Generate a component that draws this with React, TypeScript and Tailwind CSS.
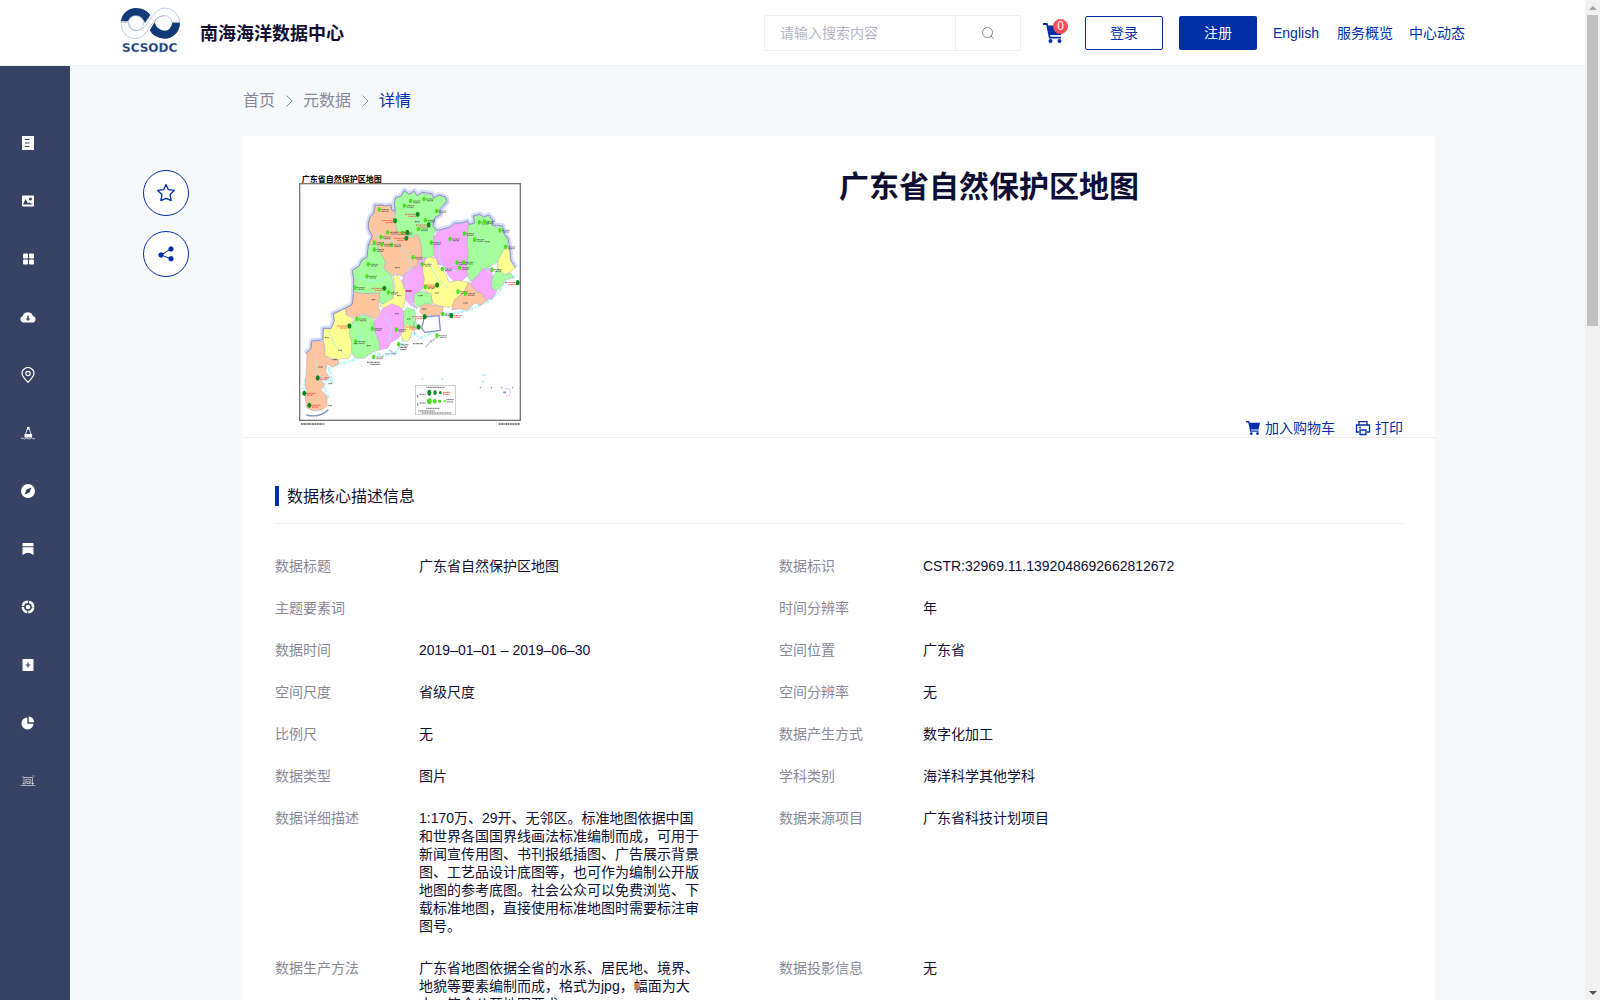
import React from 'react';

type Field = { label: string; value: string };

const fields: [Field, Field][] = [
  [{ label: '数据标题', value: '广东省自然保护区地图' }, { label: '数据标识', value: 'CSTR:32969.11.1392048692662812672' }],
  [{ label: '主题要素词', value: '' }, { label: '时间分辨率', value: '年' }],
  [{ label: '数据时间', value: '2019–01–01 – 2019–06–30' }, { label: '空间位置', value: '广东省' }],
  [{ label: '空间尺度', value: '省级尺度' }, { label: '空间分辨率', value: '无' }],
  [{ label: '比例尺', value: '无' }, { label: '数据产生方式', value: '数字化加工' }],
  [{ label: '数据类型', value: '图片' }, { label: '学科类别', value: '海洋科学其他学科' }],
  [
    {
      label: '数据详细描述',
      value:
        '1:170万、29开、无邻区。标准地图依据中国和世界各国国界线画法标准编制而成，可用于新闻宣传用图、书刊报纸插图、广告展示背景图、工艺品设计底图等，也可作为编制公开版地图的参考底图。社会公众可以免费浏览、下载标准地图，直接使用标准地图时需要标注审图号。',
    },
    { label: '数据来源项目', value: '广东省科技计划项目' },
  ],
  [
    { label: '数据生产方法', value: '广东省地图依据全省的水系、居民地、境界、地貌等要素编制而成，格式为jpg，幅面为大小，符合公开地图要求。' },
    { label: '数据投影信息', value: '无' },
  ],
];

const menu: { name: string; icon: React.ReactNode }[] = [
  { name: '元数据', icon: <path fillRule="evenodd" d="M2 1h12v14H2zM5 4v1h4.500V4zM5 7.500v1h4.500v-1zM5 11v1h4.500v-1z" /> },
  {
    name: '图片',
    icon: <path fillRule="evenodd" d="M3 2.500h10a1 1 0 0 1 1 1v9a1 1 0 0 1-1 1H3a1 1 0 0 1-1-1v-9a1 1 0 0 1 1-1zM3 11.500h10L9.500 9.500 8 10.500 5.500 6zM10.500 4.500a1.500 1.500 0 1 0 0 3 1.500 1.500 0 0 0 0-3z" />,
  },
  {
    name: '分类',
    icon: (
      <>
        <rect x="3" y="2.500" width="5" height="5" rx="1" />
        <rect x="9" y="2.500" width="5" height="5" rx="1" />
        <rect x="3" y="8.500" width="5" height="5" rx="1" />
        <rect x="9" y="8.500" width="5" height="5" rx="1" />
      </>
    ),
  },
  {
    name: '下载',
    icon: <path fillRule="evenodd" d="M4 13.500a3.400 3.400 0 0 1-1.300-6.600A5.400 5.400 0 0 1 13 7a3.300 3.300 0 0 1-1 6.500zM7.300 6.500v3H5.700L8 12l2.300-2.500H8.700v-3z" />,
  },
  {
    name: '位置',
    icon: (
      <g fill="none" stroke="currentColor" strokeWidth="1.200">
        <path d="M8 15.300C5 12 2 9.300 2 6.500a6 6 0 0 1 12 0c0 2.800-3 5.500-6 8.800z" />
        <circle cx="8" cy="6.500" r="2.200" />
      </g>
    ),
  },
  {
    name: '浮标',
    icon: (
      <>
        <path d="M7 2h2.500v2.500H7zM4.500 9h7.600v3.500H4.500z" />
        <path d="M7.200 4 5.500 9.500M9.300 4 11 9.500" fill="none" stroke="currentColor" strokeWidth=".8" />
        <path d="M1 13.500q1.200-1 2.300 0t2.300 0 2.400 0 2.300 0 2.300 0 2.400 0" fill="none" stroke="currentColor" strokeWidth=".7" />
      </>
    ),
  },
  { name: '导航', icon: <path fillRule="evenodd" d="M8 1a7 7 0 1 0 0 14A7 7 0 0 0 8 1zM11.500 4.500l-2 5-5 2 2-5z" /> },
  { name: '专题', icon: <path d="M2.500 2h11v3.200h-11zM2.500 6.300h11V14L10.500 12.300 8 11.700l-2.500.600L2.500 14z" /> },
  {
    name: '服务',
    icon: (
      <>
        <circle cx="8" cy="8" r="5.200" fill="none" stroke="currentColor" strokeWidth="2.600" strokeDasharray="7.170 1" strokeDashoffset="-.5" />
        <circle cx="8" cy="8" r="2.300" />
      </>
    ),
  },
  { name: '新增', icon: <path fillRule="evenodd" d="M2.500 2h11v12h-11zM7.400 5.600v1.800H5.600v1.200h1.800v1.800h1.200V8.600h1.800V7.400H8.600V5.600z" /> },
  { name: '统计', icon: <path d="M7.300 2.500V8.700h6.200A6 6 0 1 1 7.300 2.500zM8.800 7.300V1.500a5.400 5.400 0 0 1 5.200 5.800z" /> },
  {
    name: '平台',
    icon: (
      <g fill="none" stroke="currentColor" strokeWidth=".9" opacity=".65">
        <path d="M4 12V4.500h8.500V12M5.800 11V6.300h5V11M.5 12.500h15M2 4h2M12.500 3h2M2.500 10.500h2M11.500 10.500H14M7 8.500h2.500v2H7z" />
      </g>
    ),
  },
];

function Logo() {
  return (
    <svg viewBox="57 22 189 141" className="h-[47px] w-[63px]" role="img" aria-label="SCSODC">
      <g stroke="#9fb0cc" strokeWidth="2" fill="#fff">
        <path d="M64 68A44 44 0 0 0 108 117C145 117 152 48 194 48A22 22 0 0 1 216 68H239A45 45 0 0 0 194 25C154 25 148 93 108 93A22 22 0 0 1 86 68Z" />
      </g>
      <path d="M63 65A46 42 0 0 1 108 25Q136 25 151 46L135 70Q127 48 108 48Q90 48 85 65Z" fill="#123a78" />
      <path d="M240 69A46 47 0 0 1 194 117Q163 117 149 92L164 68Q171 93 194 93Q212 92 217 69Z" fill="#123a78" />
      <path d="M85 65Q90 48 108 48Q127 48 131 70Q127 93 108 93Q88 92 86 68M164 69Q168 48 194 48" fill="none" stroke="#9fb0cc" strokeWidth="2" />
      <text x="66" y="156" fontFamily="DejaVu Sans, sans-serif" fontWeight="bold" fontSize="36" fill="#123a78" stroke="#b9c7dc" strokeWidth="1">
        SCSODC
      </text>
    </svg>
  );
}

function CartIcon({ className }: { className: string }) {
  return (
    <svg viewBox="0 0 20 20" className={className} fill="currentColor" aria-hidden="true">
      <path d="M0 0h4.500l.8 2.500H20l-2 9.500H7l.5 1.700H18v1.800H6L3.300 2H0z" />
      <circle cx="7.500" cy="18" r="2" />
      <circle cx="16.500" cy="18" r="2" />
    </svg>
  );
}

function Separator() {
  return (
    <svg viewBox="0 0 16 16" className="size-4" fill="none" stroke="currentColor" aria-hidden="true">
      <path d="m5.500 2.500 5.500 5.500-5.500 5.500" />
    </svg>
  );
}

const regions: { color: string; points: string }[] = [
  { color: '#a4ff9c', points: '332,98 348,94 358,78 372,88 388,80 396,92 412,84 424,90 440,88 446,98 462,92 480,96 484,110 470,122 462,136 464,150 448,156 442,180 452,196 444,212 452,226 446,244 450,264 438,280 410,278 408,246 404,220 390,212 376,218 362,206 338,208 334,186 328,160 334,140 328,118' },
  { color: '#ffc69f', points: '272,122 290,118 302,124 318,120 318,134 330,140 326,160 334,186 336,208 362,208 378,220 398,208 408,240 410,276 398,292 398,304 378,308 352,334 330,326 320,332 296,310 302,292 284,260 276,238 250,240 262,214 252,196 250,176 256,156 266,146' },
  { color: '#a4ff9c', points: '250,240 276,238 284,260 302,292 296,310 320,332 326,370 324,400 300,418 280,412 284,382 240,386 204,380 206,342 202,318 222,304 230,286 246,276' },
  { color: '#f9a8ff', points: '446,214 466,196 496,188 508,176 530,176 546,168 550,204 548,236 552,266 546,306 550,330 532,346 510,352 490,332 478,302 456,298 448,274 446,240' },
  { color: '#a4ff9c', points: '550,178 570,176 566,154 584,150 596,158 612,152 622,166 620,180 636,188 650,184 656,206 668,222 668,240 654,254 650,280 636,292 610,308 592,312 580,330 558,350 548,334 544,306 550,266 546,236' },
  { color: '#ffff91', points: '668,240 674,262 676,286 690,308 676,322 658,330 644,324 636,306 640,282 656,256' },
  { color: '#a4ff9c', points: '640,310 658,330 678,324 686,338 664,342 652,360 640,374 620,372 618,342' },
  { color: '#f9a8ff', points: '562,346 582,330 592,312 620,310 622,340 618,370 636,378 622,402 602,404 588,384 574,380 556,366' },
  { color: '#ffff91', points: '418,282 434,276 454,280 460,304 482,326 492,352 520,346 548,352 552,370 530,386 514,408 494,428 470,424 444,416 436,386 412,372 416,342 410,312' },
  { color: '#ffc69f', points: '552,350 574,380 588,384 606,406 588,420 568,414 548,436 526,432 500,434 508,404 534,384' },
  { color: '#f9a8ff', points: '382,310 398,304 400,284 422,278 412,312 418,342 414,370 392,386 386,416 396,430 376,420 358,400 362,382 350,354 356,330' },
  { color: '#ffff91', points: '324,332 336,330 354,356 362,384 360,406 354,430 338,432 324,426 296,430 284,422 324,400 330,368' },
  { color: '#a4ff9c', points: '388,386 412,378 438,388 442,414 416,420 398,428 386,406' },
  { color: '#ffc69f', points: '408,424 420,416 446,420 474,426 472,446 448,460 434,448 420,458 404,440' },
  { color: '#ffc69f', points: '206,382 240,386 284,384 280,422 286,446 270,462 236,446 210,460 184,448 182,430 200,420' },
  { color: '#f9a8ff', points: '320,416 344,426 356,438 356,466 358,496 340,520 318,532 308,550 284,554 282,528 268,494 266,470 286,450 290,434' },
  { color: '#a4ff9c', points: '356,438 368,428 390,436 392,470 398,490 374,488 366,510 356,494' },
  { color: '#ffff91', points: '366,476 384,490 376,516 368,530 352,524 348,508' },
  { color: '#a4ff9c', points: '210,462 238,448 266,464 268,496 282,530 284,554 260,562 238,580 212,578 196,560 200,530 190,502' },
  { color: '#ffff91', points: '180,430 184,450 206,462 192,504 200,532 200,562 190,582 170,580 152,590 130,574 116,576 120,552 114,522 116,490 138,492 148,468 146,448' },
  { color: '#ffc69f', points: '94,528 116,532 120,572 136,582 158,582 162,596 142,606 126,596 122,620 134,638 122,642 112,632 104,638 118,660 108,674 126,696 126,722 112,734 86,738 66,730 60,700 66,680 60,660 64,620 66,564 78,552 80,530' },
];

const outline =
  'M62,566L78,550 80,528 114,524 114,490 138,490 148,468 144,446 180,430 202,418 206,382 206,342 202,316 222,304 230,286 246,276 250,240 262,214 250,192 250,174 256,154 266,144 270,120 302,122 318,120 320,134 330,140 328,116 332,98 348,94 358,76 372,88 388,78 396,92 412,82 440,86 446,98 462,90 482,96 486,110 464,136 466,150 450,158 444,182 454,196 466,194 496,186 508,174 530,174 548,168 552,178 568,174 566,152 584,148 596,156 612,150 624,166 622,180 652,182 658,206 670,222 676,262 678,286 692,308';

// x, y pairs of the reserve markers
const reserves = [
  [283, 134], [358, 122], [377, 108], [417, 102], [455, 138], [421, 166], [400, 192], [439, 233], [308, 202], [288, 216], [268, 233],
  [320, 240], [353, 204], [250, 298], [246, 334], [210, 368], [310, 382], [384, 277], [411, 298], [495, 222], [538, 206], [569, 224],
  [645, 196], [583, 172], [599, 170], [516, 293], [536, 292], [524, 308], [472, 312], [421, 366], [519, 380], [541, 386], [621, 314],
  [216, 462], [262, 491], [334, 494], [212, 530], [341, 538], [266, 576], [456, 512], [473, 447], [662, 246], [268, 254], [290, 238],
];
const nationalReserves = [
  [330, 167], [398, 148], [431, 180], [367, 202], [364, 220], [298, 370], [456, 360], [193, 483], [401, 486], [419, 455], [499, 452],
  [698, 353], [98, 639], [58, 685], [73, 721],
];

function ReserveMap() {
  return (
    <svg viewBox="42 30 666 756" className="h-[252px] w-[222px]" role="img" aria-label="广东省自然保护区地图">
      <text x="50" y="50" fontSize="24" fontWeight="bold" fontFamily="Liberation Sans, Noto Sans CJK SC, sans-serif">
        广东省自然保护区地图
      </text>
      <rect x="44" y="56" width="662" height="710" fill="none" stroke="#777" strokeWidth="4" />
      <path d={outline} fill="none" stroke="#d5dcff" strokeWidth="16" strokeLinejoin="round" />
      <path
        d="M130,700L116,664 124,644 140,650 132,610 150,600 198,588 262,562 290,572 330,566 352,530 392,506 404,520 450,500M472,450L500,446 550,436 604,412 640,384 660,352 696,330M62,640L56,670 64,700"
        fill="none"
        stroke="#bff8fb"
        strokeWidth="8"
        strokeDasharray="14 4 6 3"
      />
      {regions.map((r) => (
        <polygon key={r.points} points={r.points} fill={r.color} stroke="#a9a9b8" strokeWidth="1.500" />
      ))}
      <path d={outline} fill="none" stroke="#8390bd" strokeWidth="3" strokeLinejoin="round" strokeDasharray="7 1" />
      <path
        d="M264,190L282,220 324,230 360,260 380,300 362,344 372,390 388,430 380,480M220,340L270,350 320,330M460,220L464,280 478,310 520,320M430,290L456,340 490,370M570,200L600,250 590,300 620,330M196,470L230,500 220,550M90,560L96,620 110,640M130,500L150,540 180,570M300,450L320,490 310,530M350,100L380,150 430,200"
        fill="none"
        stroke="#a5edf2"
        strokeWidth="2.500"
      />
      <path d="M418,456L462,452 466,496 420,502 410,490Z" fill="#fff" stroke="#8390bd" strokeWidth="4" />
      <path d="M386,470v14M388,494v14M422,546l18-22M438,532l14-14M300,566h34M312,556l20 12" stroke="#7f93b8" strokeWidth="4" strokeDasharray="5 2" opacity=".7" />
      <path d="M64,750Q104,760 130,734" fill="none" stroke="#7d8fc4" strokeWidth="4" />
      {reserves.map(([x, y]) => (
        <g key={`${x}-${y}`}>
          <path d={`M${x + 6} ${y}h24M${x + 8} ${y + 5}h20`} stroke="#222" strokeWidth="3" strokeDasharray="3 1" opacity=".6" />
          <ellipse cx={x} cy={y} rx="5" ry="7" fill="#4be01e" />
        </g>
      ))}
      {nationalReserves.map(([x, y], i) => (
        <g key={`${x}-${y}`}>
          <path
            d={x < 100 || i === 10 ? `M${x + 6} ${y}h28M${x + 8} ${y + 5}h20` : `M${x - 38} ${y}h32M${x - 28} ${y + 6}h22`}
            stroke="#f33"
            strokeWidth="3"
            strokeDasharray="3 1"
            opacity=".8"
          />
          <ellipse cx={x} cy={y} rx="6" ry="8" fill="#0b8a1c" />
        </g>
      ))}
      <path d="M362,378h18" stroke="#d0104c" strokeWidth="4" />
      <path
        d="M390,170h14M330,308h14M260,404h12M336,392h12M450,384h12M600,230h14M400,392h14M535,414h14M160,556h12M100,606h14M206,536h12M246,542h12M142,584h16M120,518h12M330,446h12M366,462h12M410,432h14M384,536h30M246,592h38M256,598h30M344,548h22M346,554h18M130,656h12M130,722h12"
        stroke="#555"
        strokeWidth="3"
        strokeDasharray="3 1"
      />
      <rect x="391" y="661" width="121" height="88" fill="#fff" stroke="#bbb" strokeWidth="2" />
      <path d="M424,667h54M404,688h18M404,714h18M484,704h22M486,711h18M424,730h40M400,738h50M410,744h90" stroke="#444" strokeWidth="3" strokeDasharray="4 1" opacity=".8" />
      <path d="M474,682h22M474,688h20" stroke="#f44" strokeWidth="3" strokeDasharray="3 1" />
      {[433, 450, 466].map((x, i) => (
        <ellipse key={x} cx={x} cy="683" rx={6 - i} ry={9 - i * 2} fill="#0b8a1c" />
      ))}
      {[433, 449, 464, 479].map((x, i) => (
        <ellipse key={x} cx={x} cy="709" rx={7 - i} ry={9 - i * 2} fill="#4be01e" />
      ))}
      <path d="M398,690v8M398,714v8M586,666v4M619,666v4M651,666v4M683,666v4" stroke="#777" strokeWidth="3" />
      <path d="M409,642h6M469,642h6M592,630h10M590,650h8" stroke="#a5edf2" strokeWidth="5" />
      <path d="M660,672Q676,668 676,682T660,692" fill="none" stroke="#f39bf3" strokeWidth="3" strokeDasharray="6 3" />
      <path d="M655,682h8" stroke="#7d8fc4" strokeWidth="5" />
      <path d="M48,777h70M642,777h62" stroke="#333" strokeWidth="5" strokeDasharray="4 1 3 1 5 2" opacity=".85" />
    </svg>
  );
}

function Header() {
  return (
    <header className="flex h-[66px] shrink-0 items-center border-b border-[#f0f2f5] bg-white px-[120px]">
      <a href="#" className="-ml-px mb-1 shrink-0">
        <Logo />
      </a>
      <span className="mt-0.5 ml-[18px] text-lg font-bold text-[#0f0f33]">南海海洋数据中心</span>
      <form className="ml-auto flex h-9 w-[257px] shrink-0 rounded-xs border border-[#eee]" onSubmit={(e) => e.preventDefault()}>
        <input type="text" aria-label="搜索" placeholder="请输入搜索内容" className="min-w-0 flex-1 px-[15px] outline-none placeholder:text-[#b5b5c3]" />
        <button type="submit" aria-label="搜索" className="flex w-[65px] items-center justify-center border-l border-[#eee] text-[#888]">
          <svg viewBox="0 0 14 14" className="size-[14px]" fill="none" stroke="currentColor" aria-hidden="true">
            <circle cx="6.500" cy="6.500" r="5" />
            <path d="m10 10 2.500 2.500" />
          </svg>
        </button>
      </form>
      <button type="button" aria-label="购物车" className="relative ml-[22px] text-[#002fa7]">
        <CartIcon className="size-5" />
        <span className="absolute -top-1 left-[10px] flex size-[15px] items-center justify-center rounded-full bg-[#ff4d57] text-xs text-white">0</span>
      </button>
      <button type="button" className="ml-[22px] h-[34px] w-[78px] rounded-xs border border-[#002fa7] text-[#002fa7]">
        登录
      </button>
      <button type="button" className="ml-4 h-[34px] w-[78px] rounded-xs bg-[#002fa7] text-white">
        注册
      </button>
      <nav className="ml-4 flex items-center gap-4 text-[#002fa7]">
        <a href="#" className="w-12">English</a>
        <a href="#">服务概览</a>
        <a href="#">中心动态</a>
      </nav>
    </header>
  );
}

function Sidebar() {
  return (
    <nav className="flex w-[70px] shrink-0 flex-col gap-[42px] bg-[#374264] pt-[69px] pl-5 text-white">
      {menu.map((item) => (
        <a key={item.name} href="#" aria-label={item.name} className="size-4">
          <svg viewBox="0 0 16 16" className="size-4" fill="currentColor" aria-hidden="true">
            {item.icon}
          </svg>
        </a>
      ))}
    </nav>
  );
}

function DetailField({ label, value }: Field) {
  return (
    <div className="flex leading-[18px]">
      <dt className="w-36 shrink-0 text-[#888899]">{label}</dt>
      <dd className="max-w-[284px] text-[#0f0f33]">{value}</dd>
    </div>
  );
}

function Scrollbar() {
  return (
    <div className="flex w-[15px] shrink-0 flex-col items-center justify-between bg-[#f1f1f1]" aria-hidden="true">
      <div className="flex w-full flex-col items-center">
        <span className="flex h-[15px] items-center">
          <svg viewBox="0 0 8 4" className="h-1 w-2" fill="#a3a3a3"><path d="M0 4 4 0l4 4z" /></svg>
        </span>
        <span className="h-[311px] w-[11px] bg-[#c1c1c1]" />
      </div>
      <span className="flex h-[15px] items-center">
        <svg viewBox="0 0 8 4" className="h-1 w-2" fill="#505050"><path d="m0 0 4 4 4-4z" /></svg>
      </span>
    </div>
  );
}

function App() {
  return (
    <div className="flex h-screen overflow-hidden bg-[#f7f8fa] font-['Liberation_Sans','Noto_Sans_CJK_SC',sans-serif] text-sm">
      <div className="flex min-w-0 flex-1 flex-col">
        <Header />
        <div className="flex min-h-0 flex-1">
          <Sidebar />
          <aside className="flex shrink-0 flex-col gap-[15px] pt-[104px] pl-[73px] text-[#002fa7]">
            <button type="button" aria-label="收藏" className="flex size-[46px] items-center justify-center rounded-full border border-[#002fa7] bg-white">
              <svg viewBox="0 0 20 20" className="size-5" fill="none" stroke="currentColor" strokeWidth="1.300" strokeLinejoin="round">
                <path d="m10 1.500 2.400 5.200 5.900.7-4.300 4 1.200 6.200-5.200-2.300-5.200 2.300L6 11.400 1.700 7.400 7.600 6.700z" />
              </svg>
            </button>
            <button type="button" aria-label="分享" className="flex size-[46px] items-center justify-center rounded-full border border-[#002fa7] bg-white">
              <svg viewBox="0 0 16 16" className="size-4" fill="currentColor" stroke="currentColor">
                <path d="M13 3 3 9l10 3.800" fill="none" />
                <circle cx="13" cy="3" r="2.200" />
                <circle cx="3" cy="9" r="2.200" />
                <circle cx="13" cy="12.800" r="2.200" />
              </svg>
            </button>
          </aside>
          <main className="min-w-0 flex-1 pr-[150px] pl-[54px]">
            <nav aria-label="面包屑" className="flex h-[70px] items-center gap-1.5 text-base text-[#888899]">
              <a href="#">首页</a>
              <Separator />
              <a href="#">元数据</a>
              <Separator />
              <a href="#" className="text-[#002fa7]">详情</a>
            </nav>
            <article className="bg-white">
              <div className="flex h-[302px] border-b border-[#ebebeb] pr-8 pl-14">
                <div className="shrink-0 pt-[39px]">
                  <ReserveMap />
                </div>
                <div className="ml-[54px] flex flex-1 flex-col justify-between">
                  <h1 className="pt-[30px] text-center text-[30px] leading-[42px] font-bold text-[#0f0f33]">广东省自然保护区地图</h1>
                  <div className="flex justify-end gap-5 text-[#002fa7]">
                    <button type="button" className="flex items-center gap-1 leading-[18px]">
                      <CartIcon className="h-[14px] w-4" />
                      加入购物车
                    </button>
                    <button type="button" className="flex items-center gap-1 leading-[18px]">
                      <svg viewBox="0 0 16 16" className="size-4" fill="none" stroke="currentColor" strokeWidth="1.300" aria-hidden="true">
                        <path d="M4 5V1.700h8V5M4 12H1.500V5h13v7H12M4 7.500h2" />
                        <path d="M5 10h6v4.500H5z" />
                      </svg>
                      打印
                    </button>
                  </div>
                </div>
              </div>
              <section className="px-8 pt-12">
                <div className="border-b border-[#ebebeb] pb-[17px]">
                  <h2 className="flex h-5 items-center gap-2 text-base leading-5 text-[#0f0f33]">
                    <span className="h-5 w-1 bg-[#002fa7]" />
                    <span className="pt-0.5">数据核心描述信息</span>
                  </h2>
                </div>
                <dl className="flex flex-col gap-6 pt-[33px]">
                  {fields.map(([left, right]) => (
                    <div key={left.label} className="grid grid-cols-[504px_1fr]">
                      <DetailField {...left} />
                      <DetailField {...right} />
                    </div>
                  ))}
                </dl>
              </section>
            </article>
          </main>
        </div>
      </div>
      <Scrollbar />
    </div>
  );
}

export default App;
